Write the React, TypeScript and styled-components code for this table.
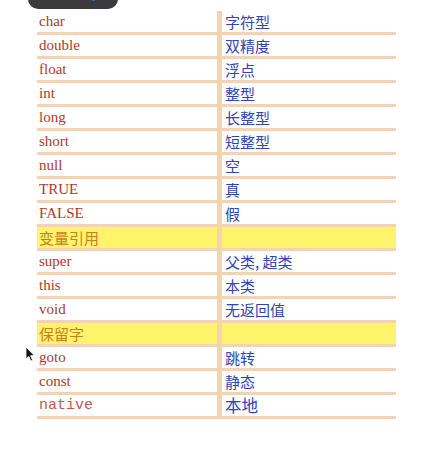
import styled, { createGlobalStyle } from 'styled-components';

const GlobalStyle = createGlobalStyle`
  html, body {
    margin: 0;
    padding: 0;
    background: #ffffff;
  }
`;

type Kind = 'plain' | 'section' | 'mono';

interface Row {
  key: string;
  value: string;
  kind?: Kind;
}

const rows: Row[] = [
  { key: 'char', value: '字符型' },
  { key: 'double', value: '双精度' },
  { key: 'float', value: '浮点' },
  { key: 'int', value: '整型' },
  { key: 'long', value: '长整型' },
  { key: 'short', value: '短整型' },
  { key: 'null', value: '空' },
  { key: 'TRUE', value: '真' },
  { key: 'FALSE', value: '假' },
  { key: '变量引用', value: '', kind: 'section' },
  { key: 'super', value: '父类, 超类' },
  { key: 'this', value: '本类' },
  { key: 'void', value: '无返回值' },
  { key: '保留字', value: '', kind: 'section' },
  { key: 'goto', value: '跳转' },
  { key: 'const', value: '静态' },
  { key: 'native', value: '本地', kind: 'mono' },
];

export default function App() {
  return (
    <Page>
      <GlobalStyle />
      <TopPill>
        <PillDot />
      </TopPill>
      <Table>
        {rows.map((r) => (
          <Line key={r.key}>
            <KeyCell kind={r.kind || 'plain'}>{r.key}</KeyCell>
            <ValueCell kind={r.kind || 'plain'}>{r.value}</ValueCell>
          </Line>
        ))}
      </Table>
      <Cursor width="10" height="16" viewBox="0 0 10 16">
        <path
          d="M1 1 L1 13 L3.8 10.4 L5.8 15 L7.6 14.2 L5.6 9.7 L9.2 9.5 Z"
          fill="#111"
          stroke="#fff"
          strokeWidth="0.8"
          strokeLinejoin="round"
        />
      </Cursor>
    </Page>
  );
}

const Page = styled.div`
  position: relative;
  width: 429px;
  height: 456px;
  overflow: hidden;
  padding: 11px 0 0 37px;
  box-sizing: border-box;
`;

const TopPill = styled.div`
  position: absolute;
  left: 28px;
  top: -21px;
  width: 90px;
  height: 30px;
  border-radius: 10px;
  background: #3b3b3d;
`;

const PillDot = styled.div`
  position: absolute;
  left: 64px;
  bottom: 8px;
  width: 3px;
  height: 3px;
  border-radius: 50%;
  background: #2f7cf0;
`;

const Table = styled.div`
  display: grid;
  grid-template-columns: 180px 174px;
  column-gap: 5px;
  row-gap: 3px;
  padding-bottom: 3px;
  width: 359px;
  background: #f2d3b2;
`;

const Line = styled.div`
  display: contents;
`;

const KeyCell = styled.div<{ kind: Kind }>`
  height: 21px;
  line-height: 21px;
  padding-left: 2px;
  white-space: nowrap;
  background: ${({ kind }) => (kind === 'section' ? '#fff46c' : '#ffffff')};
  color: ${({ kind }) =>
    kind === 'section' ? '#cc7d1c' : kind === 'mono' ? '#c2574e' : '#b1372d'};
  font-family: ${({ kind }) =>
    kind === 'section'
      ? '"Noto Sans CJK SC", sans-serif'
      : kind === 'mono'
      ? '"Liberation Mono", monospace'
      : '"Liberation Serif", serif'};
  font-size: 15px;
`;

const ValueCell = styled.div<{ kind: Kind }>`
  height: 21px;
  line-height: 21px;
  padding-left: 3px;
  white-space: nowrap;
  background: ${({ kind }) => (kind === 'section' ? '#fff46c' : '#ffffff')};
  color: #3043b4;
  font-family: "Noto Sans CJK SC", sans-serif;
  font-size: ${({ kind }) => (kind === 'mono' ? '16.5px' : '15px')};
`;

const Cursor = styled.svg`
  position: absolute;
  left: 25px;
  top: 346px;
`;
